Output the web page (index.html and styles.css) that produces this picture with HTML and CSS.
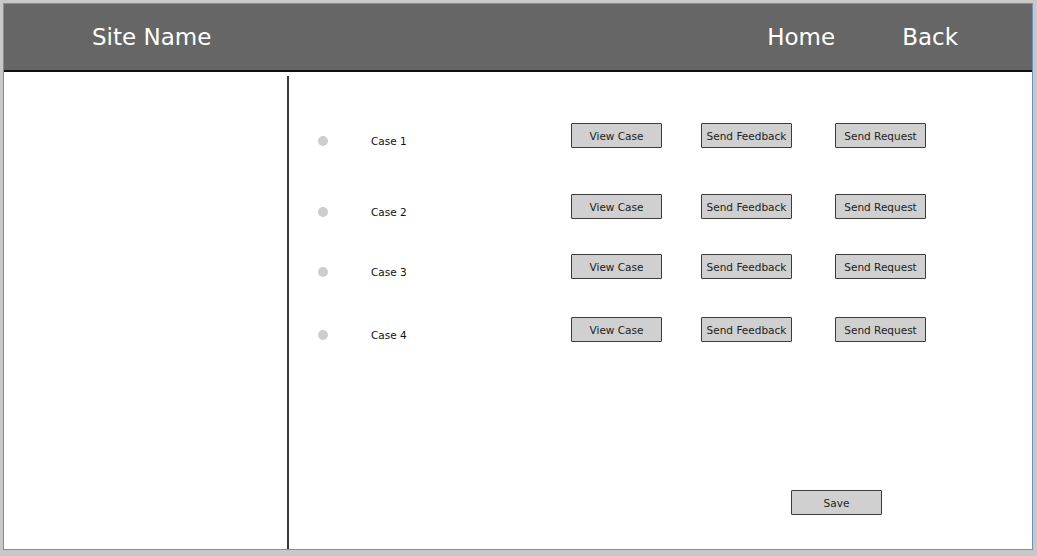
FILE: index.html
```html
<!DOCTYPE html>
<html lang="en">
<head>
  <meta charset="UTF-8">
  <meta name="viewport" content="width=device-width, initial-scale=1.0">
  <title>Cases</title>
  <link rel="stylesheet" href="styles.css">
</head>
<body>
  <div class="frame">
    <!-- Top bar -->
    <header class="topbar">
      <div class="site-name">Site Name</div>
      <nav class="nav">
        <a href="#">Home</a>
        <a href="#">Back</a>
      </nav>
    </header>

    <div class="content">
      <aside class="sidebar"></aside>

      <main class="main">
        <!-- Case list -->
        <ul class="cases">
          <li class="case">
            <span class="dot"></span>
            <span class="case-name">Case 1</span>
            <button class="btn btn-view">View Case</button>
            <button class="btn btn-feedback">Send Feedback</button>
            <button class="btn btn-request">Send Request</button>
          </li>
          <li class="case">
            <span class="dot"></span>
            <span class="case-name">Case 2</span>
            <button class="btn btn-view">View Case</button>
            <button class="btn btn-feedback">Send Feedback</button>
            <button class="btn btn-request">Send Request</button>
          </li>
          <li class="case">
            <span class="dot"></span>
            <span class="case-name">Case 3</span>
            <button class="btn btn-view">View Case</button>
            <button class="btn btn-feedback">Send Feedback</button>
            <button class="btn btn-request">Send Request</button>
          </li>
          <li class="case">
            <span class="dot"></span>
            <span class="case-name">Case 4</span>
            <button class="btn btn-view">View Case</button>
            <button class="btn btn-feedback">Send Feedback</button>
            <button class="btn btn-request">Send Request</button>
          </li>
        </ul>

        <div class="actions">
          <button class="btn">Save</button>
        </div>
      </main>
    </div>
  </div>
</body>
</html>
```

FILE: styles.css
```css
html, body {
  height: 100%;
}
body {
  margin: 0;
  background-color: #c8c8c8;
  font-family: "Comic Sans MS", "DejaVu Sans", sans-serif;
  overflow: hidden;
}
.frame {
  box-sizing: border-box;
  margin: 3px 0 0 3px;
  width: 1030px;
  height: 547px;
  border: 1px solid #6f91ba;
  background-color: #fff;
  display: flex;
  flex-direction: column;
}
.topbar {
  height: 66px;
  background-color: #666;
  border-bottom: 2px solid #111;
  display: flex;
  align-items: center;
  justify-content: space-between;
  padding: 0 74px 0 88px;
  color: #fff;
  font-size: 23px;
}
.nav {
  display: flex;
  gap: 67px;
}
.nav a {
  color: #fff;
  text-decoration: none;
}
.content {
  flex: 1;
  display: flex;
  padding-top: 4px;
}
.sidebar {
  width: 283px;
  border-right: 2px solid #3a3a3a;
}
.main {
  flex: 1;
  display: flex;
  flex-direction: column;
  padding: 47px 0 34px 29px;
}
.cases {
  list-style: none;
  margin: 0;
  padding: 0;
  display: grid;
  grid-template-rows: 71px 60px 63px 25px;
}
.case {
  display: flex;
  align-items: flex-start;
  height: 25px;
}
.dot {
  width: 10px;
  height: 10px;
  border-radius: 50%;
  background-color: #cdcdcd;
  margin-top: 13px;
}
.case-name {
  width: 200px;
  margin-left: 43px;
  margin-top: 12px;
  font-size: 10.5px;
  color: #111;
}
.btn {
  box-sizing: border-box;
  width: 91px;
  height: 25px;
  padding: 0;
  background-color: #d0d0d0;
  border: 1px solid #3c3c3c;
  border-radius: 1px;
  font-family: inherit;
  font-size: 10.5px;
  color: #222;
  cursor: pointer;
}
.btn-feedback {
  margin-left: 39px;
}
.btn-request {
  margin-left: 43px;
}
.actions {
  margin-top: auto;
  display: flex;
  justify-content: flex-end;
  padding-right: 150px;
}
```
